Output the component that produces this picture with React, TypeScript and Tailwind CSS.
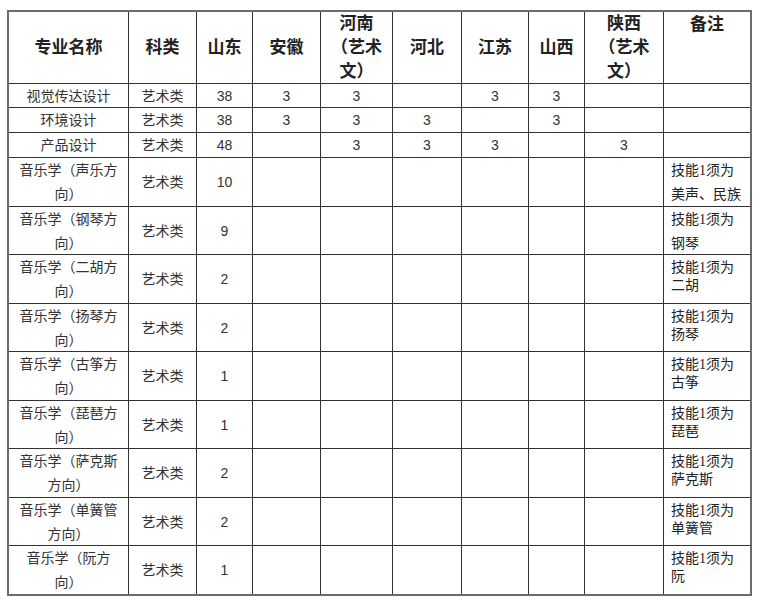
import React from "react";

const SANS = { fontFamily: '"Liberation Sans", "Noto Sans CJK SC", sans-serif' };

type Row = {
  name: string[];
  vals: string[];
  remark?: string[];
  remarkWide?: boolean;
};

const simpleRows: Row[] = [
  { name: ["视觉传达设计"], vals: ["艺术类", "38", "3", "3", "", "3", "3", ""] },
  { name: ["环境设计"], vals: ["艺术类", "38", "3", "3", "3", "", "3", ""] },
  { name: ["产品设计"], vals: ["艺术类", "48", "", "3", "3", "3", "", "3"] },
];

const music: { a: string; b: string; n: string; r: string }[] = [
  { a: "音乐学（声乐方", b: "向）", n: "10", r: "美声、民族" },
  { a: "音乐学（钢琴方", b: "向）", n: "9", r: "钢琴" },
  { a: "音乐学（二胡方", b: "向）", n: "2", r: "二胡" },
  { a: "音乐学（扬琴方", b: "向）", n: "2", r: "扬琴" },
  { a: "音乐学（古筝方", b: "向）", n: "1", r: "古筝" },
  { a: "音乐学（琵琶方", b: "向）", n: "1", r: "琵琶" },
  { a: "音乐学（萨克斯", b: "方向）", n: "2", r: "萨克斯" },
  { a: "音乐学（单簧管", b: "方向）", n: "2", r: "单簧管" },
  { a: "音乐学（阮方", b: "向）", n: "1", r: "阮" },
];

function H({ lines, top }: { lines: string[]; top?: boolean }) {
  return (
    <div
      className={
        "bg-white flex justify-center text-center font-bold text-[17px] leading-6 text-[#222] whitespace-nowrap " +
        (top ? "items-start pt-px" : "items-center")
      }
    >
      <div>
        {lines.map((l, i) => (
          <div key={i}>{l}</div>
        ))}
      </div>
    </div>
  );
}

function C({ children }: { children?: React.ReactNode }) {
  return (
    <div className="bg-white flex items-center justify-center text-center text-[14px] leading-6 text-[#333] whitespace-nowrap">
      {children}
    </div>
  );
}

export default function App() {
  return (
    <div className="min-h-[604px] w-[767px] bg-white pt-[10px] pl-[7px]" style={SANS}>
      <div className="grid w-fit gap-px border-2 border-[#6b6b6b] bg-[#333] grid-cols-[119px_67px_55px_67px_71px_68px_66px_55px_78px_86px] grid-rows-[71px_23px_24px_24px_48px_47px_48px_47px_48px_47px_48px_47px_48px]">
        <H lines={["专业名称"]} />
        <H lines={["科类"]} />
        <H lines={["山东"]} />
        <H lines={["安徽"]} />
        <H lines={["河南", "（艺术", "文）"]} />
        <H lines={["河北"]} />
        <H lines={["江苏"]} />
        <H lines={["山西"]} />
        <H lines={["陕西", "（艺术", "文）"]} />
        <H lines={["备注"]} top />

        {simpleRows.map((r, i) => (
          <React.Fragment key={i}>
            <C>{r.name[0]}</C>
            {r.vals.map((v, j) => (
              <C key={j}>{v}</C>
            ))}
            <div className="bg-white" />
          </React.Fragment>
        ))}

        {music.map((m, i) => (
          <React.Fragment key={i}>
            <C>
              <div>
                <div>{m.a}</div>
                <div>{m.b}</div>
              </div>
            </C>
            <C>艺术类</C>
            <C>{m.n}</C>
            <C />
            <C />
            <C />
            <C />
            <C />
            <C />
            <div
              className={
                "bg-white pl-[7px] text-[14px] text-[#222] whitespace-nowrap " +
                (i < 2 ? "leading-6 pt-px" : "leading-[18px] pt-1")
              }
              style={{ fontFamily: '"Liberation Serif", "Noto Sans CJK SC", serif' }}
            >
              <div>技能1须为</div>
              <div>{m.r}</div>
            </div>
          </React.Fragment>
        ))}
      </div>
    </div>
  );
}
